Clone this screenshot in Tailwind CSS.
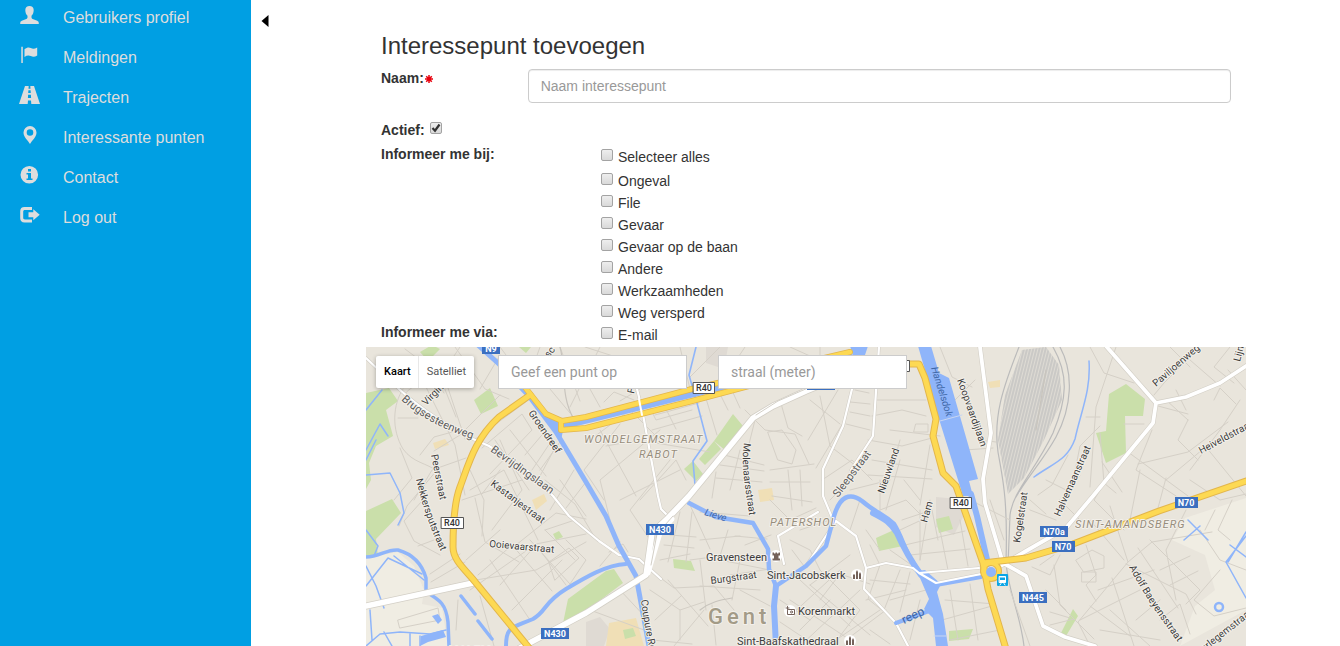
<!DOCTYPE html>
<html lang="nl">
<head>
<meta charset="utf-8">
<meta name="viewport" content="width=device-width, initial-scale=1">
<title>Interessepunt toevoegen</title>
<script src="https://cdn.jsdelivr.net/npm/@tailwindcss/browser@4"></script>
</head>
<body class="flex h-screen overflow-hidden bg-white font-['Liberation_Sans',Arial,sans-serif] text-sm text-[#333]">

<nav class="w-[251px] shrink-0 bg-[#009fe3] pt-[2px]" aria-label="Hoofdmenu">
  <ul class="flex flex-col gap-2 text-base text-[#dddddd]">
    <li><a href="#profiel" class="flex h-8 items-center gap-[23px] pl-5">
      <svg class="mb-[6px] size-5 shrink-0" viewBox="0 0 20 20" fill="currentColor" aria-hidden="true"><path d="M9.500 1C7 1 5.300 2.500 5.300 5c0 2.600.9 4.600 2.200 5.700v1.500c0 .9-.4 1.300-1.200 1.700L1.800 15.700C.8 16.200.4 16.700.3 17.500L.2 19H18.800l-.1-1.500c-.1-.8-.5-1.300-1.500-1.800l-4.500-1.800c-.8-.4-1.200-.8-1.200-1.700v-1.500c1.300-1.100 2.200-3.100 2.200-5.700 0-2.500-1.700-4-4.200-4z"/></svg>
      Gebruikers profiel</a></li>
    <li><a href="#meldingen" class="flex h-8 items-center gap-[23px] pl-5">
      <svg class="mb-[6px] size-5 shrink-0" viewBox="0 0 20 20" fill="currentColor" aria-hidden="true"><path d="M1.300 1.800h1.500V18H1.300zM4.500 4.300C7 2.300 8.800 2 10.800 3c2 1 4 .8 6.400-.6v8.100c-2.300 1.400-4.200 1.500-6.400.6-2.300-1-4.100-.5-6.300.8z"/></svg>
      Meldingen</a></li>
    <li><a href="#trajecten" class="flex h-8 items-center gap-[23px] pl-5">
      <svg class="mb-[6px] size-5 shrink-0 overflow-visible" viewBox="0 0 20 20" fill="currentColor" aria-hidden="true"><path d="M5 1h3.700l-.2 2.700h2L10.300 1H14l6 18h-8.700l-.3-3.600H8L7.700 19H-1zM8.400 5.200 8.200 7.900h2.600l-.2-2.700zM8.100 9.800l-.2 3.300h3.200l-.2-3.300z"/></svg>
      Trajecten</a></li>
    <li><a href="#punten" class="flex h-8 items-center gap-[23px] pl-5">
      <svg class="mb-[6px] size-5 shrink-0" viewBox="0 0 20 20" fill="currentColor" fill-rule="evenodd" aria-hidden="true"><path d="M10 1a6.500 6.500 0 0 0-6.500 6.500C3.500 12 8 15.500 10 19c2-3.500 6.500-7 6.500-11.500A6.500 6.500 0 0 0 10 1zm0 3.200a3.300 3.300 0 1 1 0 6.600 3.300 3.300 0 0 1 0-6.600z"/></svg>
      Interessante punten</a></li>
    <li><a href="#contact" class="flex h-8 items-center gap-[23px] pl-5">
      <svg class="mb-[6px] size-5 shrink-0" viewBox="0 0 20 20" fill="currentColor" fill-rule="evenodd" aria-hidden="true"><path d="M9.300 1a8.800 8.800 0 1 0 0 17.600A8.800 8.800 0 0 0 9.300 1zM8 4h3v2.500H8zM6.500 8H11v5.500h1.500V15H6.500v-1.500H8v-4H6.500z"/></svg>
      Contact</a></li>
    <li><a href="#logout" class="flex h-8 items-center gap-[23px] pl-5">
      <svg class="mb-[6px] size-5 shrink-0" viewBox="0 0 20 20" fill="currentColor" aria-hidden="true"><path d="M12 2v3H5C3.700 5 3.200 5.500 3.200 6.800v6c0 1.200.5 1.700 1.800 1.700h7v3H4.500c-2.800 0-4.300-1.500-4.300-4.200V6.200C.2 3.500 1.700 2 4.500 2zM13.300 4.200l6.400 5.500-6.400 5.500V12.300H8.500V7.200h4.800z"/></svg>
      Log out</a></li>
  </ul>
</nav>

<main class="flex min-w-0 flex-1">
  <div class="w-[115px] shrink-0 pl-[10px] pt-[14px]">
    <button type="button" aria-label="Menu inklappen" class="block"><svg class="h-[14px] w-2" viewBox="0 0 8 14" aria-hidden="true"><path d="M7.500 1v12L.5 7z"/></svg></button>
  </div>

  <div class="mr-[94px] flex min-w-0 flex-1 flex-col">
    <form class="shrink-0">
      <h1 class="px-[15px] pt-[33px] text-2xl leading-[26px]">Interessepunt toevoegen</h1>
      <div class="flex pt-[9px]">
        <label for="naam" class="flex w-1/6 items-start gap-px pl-[15px] font-bold leading-5">Naam:
          <svg class="mt-[7px] size-2" viewBox="0 0 8 8" stroke="#e8000d" stroke-width="1.500" aria-label="verplicht"><path d="M4 0v8M0 4h8M1.200 1.200l5.600 5.600M6.800 1.200 1.200 6.800"/></svg>
        </label>
        <div class="w-5/6 px-[15px] pt-px"><input id="naam" type="text" placeholder="Naam interessepunt" class="block h-[34px] w-full rounded border border-[#ccc] px-3 shadow-[inset_0_1px_1px_rgba(0,0,0,0.075)] outline-none placeholder:text-[#999]"></div>
      </div>
      <div class="flex items-center gap-[5px] pl-[15px] pt-4">
        <label for="actief" class="font-bold leading-[22px]">Actief:</label>
        <span class="relative mb-1 block size-3">
          <input id="actief" type="checkbox" checked class="peer block size-3 appearance-none rounded-xs border border-[#a3a3a3] bg-linear-to-b from-[#eeeeee] to-[#d9d9d9]">
          <svg class="pointer-events-none absolute left-0 top-0 hidden size-3 peer-checked:block" viewBox="0 0 12 12" fill="none" stroke="#333" stroke-width="2.200" aria-hidden="true"><path d="m2.500 6 2.500 2.700L9.500 2.500"/></svg>
        </span>
      </div>
      <fieldset class="flex pt-[3px]">
        <legend class="float-left w-1/4 pl-[15px] font-bold leading-5">Informeer me bij:</legend>
        <div class="flex w-3/4 flex-col pl-[15px] pt-[2px]">
          <label class="mb-[2px] flex h-[22px] items-center gap-[5px]"><input type="checkbox" class="mb-1 size-3 appearance-none rounded-xs border border-[#a3a3a3] bg-linear-to-b from-[#eeeeee] to-[#d9d9d9]">Selecteer alles</label>
          <label class="flex h-[22px] items-center gap-[5px]"><input type="checkbox" class="mb-1 size-3 appearance-none rounded-xs border border-[#a3a3a3] bg-linear-to-b from-[#eeeeee] to-[#d9d9d9]">Ongeval</label>
          <label class="flex h-[22px] items-center gap-[5px]"><input type="checkbox" class="mb-1 size-3 appearance-none rounded-xs border border-[#a3a3a3] bg-linear-to-b from-[#eeeeee] to-[#d9d9d9]">File</label>
          <label class="flex h-[22px] items-center gap-[5px]"><input type="checkbox" class="mb-1 size-3 appearance-none rounded-xs border border-[#a3a3a3] bg-linear-to-b from-[#eeeeee] to-[#d9d9d9]">Gevaar</label>
          <label class="flex h-[22px] items-center gap-[5px]"><input type="checkbox" class="mb-1 size-3 appearance-none rounded-xs border border-[#a3a3a3] bg-linear-to-b from-[#eeeeee] to-[#d9d9d9]">Gevaar op de baan</label>
          <label class="flex h-[22px] items-center gap-[5px]"><input type="checkbox" class="mb-1 size-3 appearance-none rounded-xs border border-[#a3a3a3] bg-linear-to-b from-[#eeeeee] to-[#d9d9d9]">Andere</label>
          <label class="flex h-[22px] items-center gap-[5px]"><input type="checkbox" class="mb-1 size-3 appearance-none rounded-xs border border-[#a3a3a3] bg-linear-to-b from-[#eeeeee] to-[#d9d9d9]">Werkzaamheden</label>
          <label class="flex h-[22px] items-center gap-[5px]"><input type="checkbox" class="mb-1 size-3 appearance-none rounded-xs border border-[#a3a3a3] bg-linear-to-b from-[#eeeeee] to-[#d9d9d9]">Weg versperd</label>
        </div>
      </fieldset>
      <fieldset class="flex pb-px">
        <legend class="float-left w-1/4 pl-[15px] font-bold leading-4">Informeer me via:</legend>
        <div class="w-3/4 pl-[15px]">
          <label class="flex h-[22px] items-center gap-[5px]"><input type="checkbox" class="mb-1 size-3 appearance-none rounded-xs border border-[#a3a3a3] bg-linear-to-b from-[#eeeeee] to-[#d9d9d9]">E-mail</label>
        </div>
      </fieldset>
    </form>

    <section class="relative min-h-0 flex-1 overflow-hidden bg-[#e9e5dc] font-[Roboto,sans-serif]" aria-label="Kaart van Gent">
      <svg class="absolute inset-0 size-full" viewBox="366 347 880 299" preserveAspectRatio="xMinYMin slice" fill="none" stroke-linejoin="round" stroke-linecap="round">
        <defs>
          <pattern id="tracks" width="3" height="3" patternUnits="userSpaceOnUse" patternTransform="rotate(14)"><path d="M1 0v3" stroke="#bdbdbd" stroke-width="1.200"/></pattern>
        </defs>
        <rect x="366" y="347" width="2000" height="1200" fill="#e9e5dc"/>
        <!-- light districts -->
        <g fill="#f0ede3">
          <path d="M366 558l32-6 16 14 10 24-2 14 20 4 6 38H366z"/>
          <path d="M1172 540l13-22 61-20v112l-66 36 15-40 20-16-10-35z"/>
        </g>
        <g fill="#dfdad3"><path d="M706 347h22l-4 22-18-6zM936 497l22 2 6 16-10 20-18-8zM586 622l14-5 10 12-6 17h-18z"/></g>
        <g fill="#f0dfb6"><path d="M609 623l27-5 8 28h-38zM758 490l14-2 2 12-14 2zM532 500l12-6 3 7-11 9zM433 443l12-4 4 6-14 4zM988 382l12-2v7l-10 1z"/></g>
        <!-- parks -->
        <g fill="#cadfaa">
          <path d="M366 393l23-5 9 13-12 9 7 26-17 10-7 17 2 17-5 9zM474 400l16-12 8 18-17 8zM366 511l26-12 9 14-25 26 2 17h-12zM733 414l10 12-17 25-12-10zM684 469l9-8 10 13-7 7zM714 441l-15 18 6 6 16-16zM568 599l38-28 8-2 9 14-37 28-24 17zM673 559l18 2 4 10-21-3zM876 538l20-9 7 17-24 5zM936 519l13-3 4 13-14 4zM949 631l24-2-4 10-20 2zM1126 384l19 15-2 17h-18l1 37-20 10-10-30 10-2 3-37zM1073 609l5 7-12 20-5-3zM420 352l12-7 8 4-12 12zM519 347h12l-5 6zM553 534l6-3 4 6-7 3zM623 630l10-2 3 8-11 3z"/>
        </g>
        <!-- rail yard -->
        <path d="M1022 350l24-3 13 18 3 35-18 40-20 38-16 16-10-54 7-45z" fill="#dedbd4"/>
        <path d="M1022 350l24-3 13 18 3 35-18 40-20 38-16 16-10-54 7-45z" fill="url(#tracks)"/>
        <path d="M1019 347c-16 40-26 70-21 105 4 24 10 44 8 110 2 30 14 50 18 84M1053 347c16 28 14 52 0 86-18 38-40 58-43 82l-2 50M1060 347c14 26 12 60-4 90-12 22-30 42-40 60" stroke="#bbb" stroke-width="1.200"/>
        <!-- minor streets -->
        <g stroke="#d5d0c7" stroke-width="1">
          <path d="M403 389c-10 15-12 40 0 60 10 14 24 14 34 22M404 395c12-16 34-14 40-2M398 418h20M425 385l30 60 10 50M405 349l40 30 20 60M460 347l-20 30 16 40M455 347l30 42 24 10M500 395l-40 40-26 16M420 455l14-18 22-6 18 8M437 470l-30 36-8 20M414 500l18-30 34-12M400 448l12 30-18 22M470 470l14 30-2 36M474 440l60-44M482 448l40-34 10 16-42 44M510 430l36 46M495 440l34 50M525 455l22-26M540 470l20-28M470 490l34-20 34 70M462 500l60-20M475 498l10 44 34 20M500 440l22 50-30 40M516 545l40-32 30 6M500 470l-18 24M545 480l30 24 20 34M552 440l-20 30M556 446l-16 30M574 470l-24 40M480 596l14 50M458 600l-2 30M470 590l66-46 50-10M466 560l34-30M478 575l34-30 40 46M500 585l36-40 30 40M476 580l60-10 50-28M512 610l50-50M530 620l-40-60M530 540l40 44M545 530l30 30M566 540l20 20-16 24M549 562l20-14 10 10-24 22zM440 555l-26-14-10-20 18-20M430 574l30-20M431 582l34-20M434 540l-16 6M398 620l40-12 2 12-40 8zM560 480l26 36M575 520l-30 10M566 508l20-26"/>
          <path d="M590 440l40-30 30 30M600 430l36 66M620 424l-36 46 20 30M660 430l-60 50 10 40M640 440l-34 6M664 405l12 24M660 410l20-4M604 402l10-10 20 8M646 400l10 20 36-10M655 415l44-12M652 430l50-14M650 442l60 10M680 470l-60 30M670 460l-40 50 20 30M640 500l36-40 10 20M705 395l12 40M718 390l10 20M730 386l10 22M745 410l20 20 30 4 14 30M768 432l14-2 14 20-4 14-14-4zM780 400l8 28 14 8M724 455l40 10M720 465l44 6M716 478l46 4M740 450l-10 40M716 472l-4 26M755 420l-10 40 8 50M770 470l44-6M770 482h40M772 496l40 6M788 470l4 40M770 500l20 20 26-12M800 470l2 36M700 512l50 4M690 505l20 44M700 540l40-4M670 535l26 2M664 545l30 3M660 560l30-6M680 512l-12 50M692 512l-6 50M650 570l24 18 40-2 20 24M690 560l30-4 8-26M700 560l6 50M668 580l40 46M650 590l30 20 24-8M655 620l26-24M704 610l-30 36M700 586l60 4M740 560l-8 40M720 560l50 10M740 590l30 16M680 610v30M712 605l4 40M730 575l40-6M735 536l32 3M745 545l26-10M620 590l28 30M600 566l20-24M609 552l14-8 5 8M590 610l54 20M652 640l40 4M790 540l20 10 10 20M800 530l30-10M792 550l12 16M780 600l30 20M800 580l50 46M820 570l40 40-20 26M840 570l-50 46M860 590l-60 56M880 610l-50 34M790 600l60 40M810 585l60 50M820 600l20-26 30 10M846 640l40-30M800 630l30-30M870 630l20 14M780 622l36 24M850 555l-40 30"/>
          <path d="M810 400l30 24M820 396l10 50 26 20M838 390l-30 50M846 418l-30 50M855 390l14 3M850 402l20 2M850 412l20 4M846 424l24 6M876 400h50M872 416l30-6 24 6M868 440l34 6 30-8M900 440l-14 50M890 430l50 6M916 424h12v8h-14zM872 460l60 10M868 475l64 4M930 445l-10 60M900 460l-14 50M822 480l30-20 20 20M830 500l20-20M850 490l40-10M860 500l-10 30M880 510l26-10 20 20M880 480v30M902 520l30-10 6 30M920 510v50M930 500l-10 60M905 545l60-14M910 555l60-6M940 530l8 40M960 520l8 46M900 530l30-14M880 550l-14-20M870 545l10 20M890 550l20 14M870 580l40 4M880 565l-12 34 30 24M900 570l-16 40M910 572l-10 40M866 600l40-10M890 600l36-10M920 600l-10 40M945 600l50 4M942 620l50-14M950 590l8 50M970 584l8 56M950 640l50-10M990 500l14 40M980 440l16 2M965 450l28-2M955 400l20-20M940 347l12 30 20 10M1010 590l20 56M1010 520l-40-20"/>
          <path d="M1090 347l14 26 30 10M1116 347l-20 60-6 80M1086 417h14M1100 426l-20 20-8 40M1100 433l4 50 12 10M1102 462l20 30M1068 455l-16 30-14 10M1046 480l20 10 14-14M1124 424h20M1152 430l-16 40 40 26M1128 452l60 44M1138 464l50-12 40-30M1166 480l36-30M1206 447l40 49M1188 420l-10 20 20 20M1158 406l30 8M1166 400l22 20M1200 347l-36 36-10 12M1190 360l30 26M1214 400l6-12 16 16M1228 370l18 20M1170 347l20 20M1230 347l-16 20 20 16M1176 390l10 20M1240 400l-20 30-30 40M1110 474l-16 26 30 30M1140 470l-10 50M1166 478l-8 30M1110 506l18 56 24-20 60-10M1086 545l10 30-10 10 10 16M1124 560l-34-40M1128 562l-50 60 10 20M1112 578l22 68M1126 564l60 30 10 20M1138 548l40 60M1150 540l50 50-14 14M1160 570l30-14M1170 585l28-14M1140 590l-60 30M1090 606l40 30M1098 590l56-20M1136 620l24-20M1100 630l60 10M1110 610l40 36M1076 560l16-10 12 6v12l-20 4zM1082 572h14v10h-14zM1060 555l-10 20-18-8M1054 565l6 40 20 20M1040 565l14-10M1046 590l20 20M1050 612l20 6M1050 625l24-6 20 20M1186 510l-20 40 10 50M1200 530l20 30 26 10M1215 510l-10 20M1220 570l-26 30 20 16 32-8M1190 480l30 20 26-6M1232 500l-14 30 12 10M1160 620l20-16 10 30M1030 500l16 14M1030 510l26 10M1060 500l20 20"/>
          <path d="M500 347l30 40M560 347l20 54M600 347l-30 60M540 347l-10 28M590 389l10 18M550 389l20 24M640 389l-20 12M680 347l10 42M720 347l-30 30M745 347l-6 9M790 347l20 9M820 347v9M480 389l20-34M920 500l-16-20M585 347l28 9"/>
        </g>
        <g stroke="#c8c4bd" stroke-width="1.200"><path d="M560 347c6 20 0 50 14 72M806 391l30-16M1046 370l-10 60M700 610c10-8 20-10 32-12"/></g>
        <!-- secondary white roads -->
        <g stroke="#d0ccc4" stroke-width="3.200">
          <path d="M366 358l33 31c24 22 48 36 74 50l16 7 40 26 24 24 16 20 30 25 20 14 20 4 22 20M636 385l6 24 16 87 3 13 10 10M852 389l-9 37-20 43v27l10 24M879 347l-6 89-22 34M836 521l20 15 10 32-2 21 32 34 12 23M866 568l20-5 27 5 6 5 60-5M919 573l17 10 45-9M778 536l40-24M778 536l6 28M806 566l30-45"/>
        </g>
        <g stroke="#fff" stroke-width="2.200">
          <path d="M366 358l33 31c24 22 48 36 74 50l16 7 40 26 24 24 16 20 30 25 20 14 20 4 22 20M636 385l6 24 16 87 3 13 10 10M852 389l-9 37-20 43v27l10 24M879 347l-6 89-22 34M836 521l20 15 10 32-2 21 32 34 12 23M778 536l40-24M778 536l6 28M806 566l30-45"/>
        </g>
        <!-- waterways -->
        <g stroke="#8fb5fa">
          <path d="M478 345l21 19 30 32 27 36 30 50 20 34 13 30 17 30 5 27 8 43" stroke-width="5"/>
          <path d="M560 427l146-36 144-35" stroke-width="6"/>
          <path d="M506 646c0-20 6-18 27-27 14-8 10-16 33-30 20-12 40-24 60-25" stroke-width="4"/>
          <path d="M689 503l27 14 37 6 15 26 1 20 7 17 30-20 20-20 8-30c6-20 16-24 28-15 14 12 20 12 32 23 10 16 12 34 29 52" stroke-width="4.500"/>
          <path d="M873 513c12 6 18 10 24 20 8 18 14 28 24 42" stroke-width="6"/>
          <path d="M776 586l-2 20 2 40" stroke-width="6"/>
          <path d="M936 585l45-8M896 623l33-12" stroke-width="4"/>
          <path d="M971 494l6 22 11 48" stroke-width="6"/>
          <path d="M366 557c14 0 20-8 32-7 14 4 24 14 28 28v14M426 592c14 8 20 12 22 30l1 24M461 596l14 18M478 621l14 18" stroke-width="3.500"/>
          <path d="M696 347l-7 28 8 28 10 38-14 20 2 24" stroke-width="1.600"/>
          <path d="M366 475l24-2 10 20 4 20-6 12M366 410l16-20M366 450l14-26 8 12M376 440l-10 20M366 530l12 16-4 10M366 566l10 20 8 22M366 586l22-28 34 16M394 556l30 24M370 610l2 30M366 646l14-12 20-2 30 2 16-4M392 646l-8-14M410 634v12M420 636v10" stroke-width="1.500"/>
          <path d="M1089 361c2 30-8 50-14 78-8 22-22 24-41 38M1188 520l20 20M1184 540l16-14M1246 536l-20 26 20 36M1230 545l16 12M1228 562l18-30" stroke-width="1.500"/>
          <circle cx="1219" cy="607" r="4" stroke-width="2.500"/>
        </g>
        <path d="M918 346h13l8 27 10 5 29 101-9 2 4 15h-10l-24-77zM850 346h18l-3 9h-12zM548 412l16 14-3 14-12-18zM421 636l22-6 3 7-18 5-8 4zM432 616l6-2 4 6-4 4zM917 571l8-1 16 14-4 8 6 22 5 32h-12l-3-28-9-9 5-10z" fill="#8fb5fa"/>
        <path d="M940 421l22-6M934 636h12" stroke="#c8d6f2"/>
        <path d="M866 568l20-5 27 5 6 5 60-5M919 573l17 10 45-9" stroke="#fff" stroke-width="2.200"/>
        <!-- white main roads -->
        <g stroke="#d3cfc6" stroke-width="7"><path d="M366 606l107-23M520 648l66-35 60-38 6-42 16-15 21-22 64-78 20-12 33-15 46-19 12-12"/></g>
        <g stroke="#d3cfc6" stroke-width="5"><path d="M980 347l11 86-8 46 2 24 18 60M1106 346l50 57 30-6 34-14 26-17M1156 403l-3 20-60 73-27 32-40 23-24 14M1005 564l21 12 17 50 22 11 30 9"/></g>
        <g stroke="#fff" stroke-width="5.500"><path d="M366 606l107-23M520 648l66-35 60-38 6-42 16-15 21-22 64-78 20-12 33-15 46-19 12-12"/></g>
        <path d="M648 573l12-40 12-14" stroke="#fff" stroke-width="5"/>
        <path d="M651 565l6-31 16-18M756 415l22-14 30-13" stroke="#d3cfc6"/>
        <g stroke="#fff" stroke-width="3.800"><path d="M980 347l11 86-8 46 2 24 18 60M1106 346l50 57 30-6 34-14 26-17M1156 403l-3 20-60 73-27 32-40 23-24 14M1005 564l21 12 17 50 22 11 30 9"/></g>
        <!-- ring road -->
        <g stroke="#e3b64c" stroke-width="7">
          <path d="M530 395l-31 22c-24 22-30 46-39 70-6 16-7 40-7 60 0 14 14 24 23 36l54 66M909 364h10l6 14 11 41-3 17 10 37 13 13 27 77 5 26 18 60M983 563l43-5 47-14 86-33 87-30"/>
          <path d="M524 386l22 28 16 7 24-4 106-28 158-37M561 422v8l25-2 106-27 68-18" stroke-width="6"/>
          <circle cx="991" cy="571" r="8" stroke-width="6"/>
        </g>
        <g stroke="#fdd953" stroke-width="5">
          <path d="M530 395l-31 22c-24 22-30 46-39 70-6 16-7 40-7 60 0 14 14 24 23 36l54 66M909 364h10l6 14 11 41-3 17 10 37 13 13 27 77 5 26 18 60M983 563l43-5 47-14 86-33 87-30"/>
          <path d="M524 386l22 28 16 7 24-4 106-28 158-37M561 422v8l25-2 106-27 68-18" stroke-width="4.500"/>
          <circle cx="991" cy="571" r="8" stroke-width="4"/>
        </g>
        <circle cx="991" cy="572" r="5" fill="#8fb5fa"/>
        <path d="M639 399l3 16" stroke="#fff" stroke-width="2"/>
        <path d="M524 386l-3-6" stroke="#fdd953" stroke-width="5"/>

        <!-- street names follow these baselines -->
        <defs>
          <path id="s1" d="M401 400c20 18 42 30 80 42"/><path id="s2" d="M490 451l70 50"/><path id="s3" d="M426 406l44-44"/>
          <path id="s4" d="M528 413l40 58"/><path id="s5" d="M431 455l12 60"/><path id="s6" d="M416 479c6 26 12 44 30 84"/>
          <path id="s7" d="M490 485l64 48"/><path id="s8" d="M489 547l80 7"/><path id="s9" d="M744 443c-4 20 2 50 8 90"/>
          <path id="s10" d="M838 498l44-58"/><path id="s11" d="M884 494l22-64"/><path id="s12" d="M931 368l24 76"/>
          <path id="s13" d="M957 380l32 90"/><path id="s14" d="M1156 387l56-48"/><path id="s15" d="M1201 454l60-32"/>
          <path id="s16" d="M1060 517l40-90"/><path id="s17" d="M1020 543l12-80"/><path id="s18" d="M927 523l14-50"/>
          <path id="s19" d="M1129 567c16 30 30 50 60 90"/><path id="s20" d="M1204 652l56-44"/><path id="s21" d="M641 600c2 20 6 34 12 70"/>
          <path id="s22" d="M704 515l40 12"/><path id="s23" d="M904 624l30-14"/><path id="s24" d="M711 584l60-8"/><path id="s25" d="M1240 362l10-40"/>
          <path id="s26" d="M549 358l16-20"/><path id="s27" d="M634 394l4-20"/>
        </defs>
        <g fill="#3c3c3c" stroke="#f3f0ea" stroke-width="2" paint-order="stroke" font-size="10">
          <g font-size="11" fill="#5a5a5a"><text><textPath href="#s1">Brugsesteenweg</textPath></text><text><textPath href="#s2">Bevrijdingslaan</textPath></text></g>
          <text><textPath href="#s3">Virginie</textPath></text><text><textPath href="#s4">Groendreef</textPath></text>
          <text><textPath href="#s5">Peerstraat</textPath></text><text><textPath href="#s6">Nekkersputstraat</textPath></text>
          <text><textPath href="#s7">Kastanjestraat</textPath></text><text><textPath href="#s8">Ooievaarstraat</textPath></text>
          <text><textPath href="#s9">Molenaarsstraat</textPath></text><text font-size="11" fill="#5a5a5a"><textPath href="#s10">Sleepstraat</textPath></text>
          <text><textPath href="#s11">Nieuwland</textPath></text><text><textPath href="#s13">Koopvaardijlaan</textPath></text>
          <text><textPath href="#s14">Paviljoenweg</textPath></text><text><textPath href="#s15">Heiveldstraat</textPath></text>
          <text><textPath href="#s16">Halvemaanstraat</textPath></text><text><textPath href="#s17">Kogelstraat</textPath></text>
          <text><textPath href="#s18">Ham</textPath></text><text><textPath href="#s19">Adolf Baeyensstraat</textPath></text>
          <text><textPath href="#s20">erlegemstraat</textPath></text><text><textPath href="#s21">Coupure Rechts</textPath></text>
          <text><textPath href="#s24">Burgstraat</textPath></text><text><textPath href="#s25">Lijnm</textPath></text>
          <text><textPath href="#s26">sc</textPath></text><text><textPath href="#s27">Fr</textPath></text>
          <text x="706" y="561" font-size="11">Gravensteen</text><text x="767" y="579" font-size="11">Sint-Jacobskerk</text>
          <text x="798" y="615" font-size="11">Korenmarkt</text><text x="737" y="645" font-size="11">Sint-Baafskathedraal</text>
        </g>
        <g fill="#3f68a8" font-style="italic" font-size="10"><text><textPath href="#s12">Handelsdok</textPath></text><text><textPath href="#s22">Lieve</textPath></text><text font-size="12" font-style="normal"><textPath href="#s23">reep</textPath></text></g>
        <g fill="#978d7c" stroke="#f3f0ea" stroke-width="2" paint-order="stroke" font-style="italic" font-weight="400" font-size="11" letter-spacing="1">
          <text x="584" y="443">WONDELGEMSTRAAT</text><text x="639" y="458">RABOT</text><text x="770" y="526">PATERSHOL</text><text x="1075" y="528">SINT-AMANDSBERG</text><text x="448" y="654">MALEM</text>
        </g>
        <text x="708" y="624" fill="#a39b87" stroke="#f3f0ea" stroke-width="2" paint-order="stroke" font-size="22" font-weight="500" letter-spacing="4">Gent</text>

        <!-- poi markers -->
        <g fill="#fff"><circle cx="776" cy="556" r="6"/><circle cx="857" cy="575" r="6"/><circle cx="790" cy="611" r="6"/><circle cx="850" cy="641" r="6"/></g>
        <g fill="#74625a"><path d="M772.500 552.500h1.500v1h1.500v-1h1.500v1h1.500v-1h1.500v3h-1.500v3h1.500v2h-7.500v-2h1.500v-3h-1.500z"/><path d="M853 579v-4l1-1 1 1v4zM856 579v-7l1-2 1 2v7zM859 579v-5l1-2 1 2v5zM846 645v-4l1-1 1 1v4zM849 645v-7l1-2 1 2v7zM852 645v-5l1-2 1 2v5z"/></g>
        <g stroke="#74625a"><path d="M788.500 609.500h6v5h-7v-4M786 608h3M787.500 606.500v3"/><circle cx="791.500" cy="612" r="1"/></g>
        <rect x="997" y="574" width="11" height="12" rx="1" fill="#0ba5e6"/><path d="M999.500 576.500h6v6h-6zM1000 585l1-1.500M1005 585l-1-1.500" fill="#fff" stroke="#fff"/><path d="M1000 577.500h5v2.500h-5z" fill="#0ba5e6"/>

        <!-- route shields -->
        <g fill="#fff" stroke="#555"><rect x="693.500" y="382.500" width="21" height="11"/><rect x="441.500" y="517.500" width="22" height="11"/><rect x="950.500" y="497.500" width="21" height="11"/><rect x="888.500" y="360.500" width="21" height="11"/></g>
        <g fill="#333" font-size="9" font-weight="500" text-anchor="middle"><text x="704" y="391">R40</text><text x="452" y="526">R40</text><text x="961" y="506">R40</text></g>
        <g fill="#3b6fc0"><rect x="482" y="343" width="18" height="11"/><rect x="646" y="524" width="28" height="11"/><rect x="541" y="628" width="28" height="11"/><rect x="1175" y="497" width="23" height="11"/><rect x="1040" y="526" width="28" height="11"/><rect x="1052" y="541" width="23" height="11"/><rect x="1019" y="592" width="28" height="11"/><rect x="807" y="380" width="28" height="10"/></g>
        <g fill="#fff" font-size="9" font-weight="700" text-anchor="middle"><text x="491" y="352">N9</text><text x="660" y="533">N430</text><text x="555" y="637">N430</text><text x="1186" y="506">N70</text><text x="1054" y="535">N70a</text><text x="1063" y="550">N70</text><text x="1033" y="601">N445</text></g>
      </svg>

      <div class="absolute left-[10px] top-2 flex items-center">
        <div class="mr-6 flex h-8 overflow-hidden rounded-xs bg-white text-[11px] shadow-[0_1px_4px_rgba(0,0,0,0.3)]">
          <button type="button" aria-pressed="true" class="pl-2 pr-[7px] font-medium text-black">Kaart</button>
          <button type="button" aria-pressed="false" class="border-l border-[#e8e8e8] px-2 text-[#565656]">Satelliet</button>
        </div>
        <input type="text" aria-label="Geef een punt op" placeholder="Geef een punt op" class="mr-[31px] h-[34px] w-[189px] border border-[#ccc] bg-white px-3 outline-none placeholder:text-[#999]">
        <input type="text" aria-label="straal (meter)" placeholder="straal (meter)" class="h-[34px] w-[189px] border border-[#ccc] bg-white px-3 outline-none placeholder:text-[#999]">
      </div>
    </section>
  </div>
</main>
</body>
</html>
